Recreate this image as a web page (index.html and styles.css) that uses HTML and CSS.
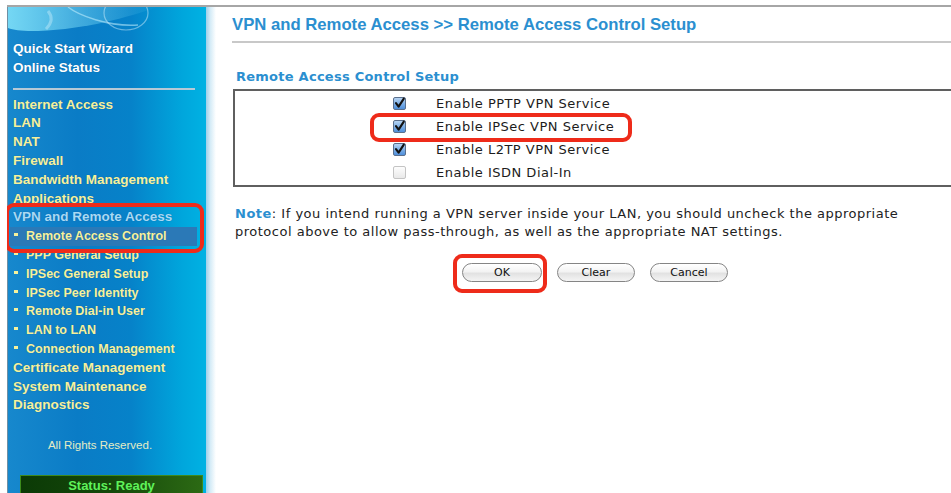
FILE: index.html
```html
<!DOCTYPE html>
<html lang="en">
<head>
<meta charset="utf-8">
<title>VPN and Remote Access</title>
<link rel="stylesheet" href="styles.css">
</head>
<body>
<div class="frame">
  <aside class="sidebar">
    <svg class="swoosh" width="198" height="30" viewBox="0 0 198 30" aria-hidden="true">
      <defs>
        <linearGradient id="sheen" x1="0" y1="0" x2="1" y2="0">
          <stop offset="0" stop-color="#7fe0f8" stop-opacity=".9"/>
          <stop offset="1" stop-color="#7fe0f8" stop-opacity="0"/>
        </linearGradient>
      </defs>
      <path d="M0 0 H150 C120 10 80 22 30 24 C15 24.5 6 23 0 21 Z" fill="url(#sheen)"/>
      <path d="M60 0 C70 8 100 20 130 18" fill="none" stroke="#c8f2ff" stroke-opacity=".55" stroke-width="1.4"/>
      <ellipse cx="118" cy="6" rx="22" ry="17" fill="none" stroke="#dff7ff" stroke-opacity=".45" stroke-width="1.2"/>
      <path d="M40 4 C45 10 44 16 38 22" fill="none" stroke="#e6faff" stroke-opacity=".35" stroke-width="3"/>
    </svg>

    <nav class="menu">
      <ul class="group">
        <li class="plain">Quick Start Wizard</li>
        <li class="plain">Online Status</li>
      </ul>
      <hr class="sep">
      <ul class="group">
        <li>Internet Access</li>
        <li>LAN</li>
        <li>NAT</li>
        <li>Firewall</li>
        <li>Bandwidth Management</li>
        <li>Applications</li>
        <li class="open">VPN and Remote Access</li>
        <li class="sub current">Remote Access Control</li>
        <li class="sub">PPP General Setup</li>
        <li class="sub">IPSec General Setup</li>
        <li class="sub">IPSec Peer Identity</li>
        <li class="sub">Remote Dial-in User</li>
        <li class="sub">LAN to LAN</li>
        <li class="sub">Connection Management</li>
        <li>Certificate Management</li>
        <li>System Maintenance</li>
        <li>Diagnostics</li>
      </ul>
    </nav>

    <p class="rights">All Rights Reserved.</p>
    <div class="status">Status: Ready</div>
  </aside>

  <div class="edge"></div>

  <main class="content">
    <h1 class="title">VPN and Remote Access &gt;&gt; Remote Access Control Setup</h1>

    <h2 class="section">Remote Access Control Setup</h2>
    <div class="options">
      <label class="opt"><span class="check on"><svg viewBox="0 0 13 13"><path d="M3 6.2 L5.6 9.6 L10.8 1.6" /></svg></span><span>Enable PPTP VPN Service</span></label>
      <label class="opt"><span class="check on"><svg viewBox="0 0 13 13"><path d="M3 6.2 L5.6 9.6 L10.8 1.6" /></svg></span><span>Enable IPSec VPN Service</span></label>
      <label class="opt"><span class="check on"><svg viewBox="0 0 13 13"><path d="M3 6.2 L5.6 9.6 L10.8 1.6" /></svg></span><span>Enable L2TP VPN Service</span></label>
      <label class="opt"><span class="check off"></span><span>Enable ISDN Dial-In</span></label>
    </div>

    <p class="note"><b>Note</b>: If you intend running a VPN server inside your LAN, you should uncheck the appropriate<br>protocol above to allow pass-through, as well as the appropriate NAT settings.</p>

    <div class="actions">
      <button class="btn btn-ok">OK</button>
      <button class="btn">Clear</button>
      <button class="btn">Cancel</button>
    </div>
  </main>

  <span class="callout callout-nav"></span>
  <span class="callout callout-opt"></span>
  <span class="callout callout-ok"></span>
</div>
</body>
</html>
```

FILE: styles.css
```css
html, body {
  margin: 0;
  padding: 0;
  background: #fff;
  overflow: hidden;
}

body {
  width: 951px;
  height: 493px;
}

.frame {
  position: relative;
  display: flex;
  margin: 5px 0 0 7px;
  height: 486px;
  border-top: 2px solid #a6a6a6;
  overflow: hidden;
}

/* ---------- left navigation ---------- */
.sidebar {
  flex: 0 0 198px;
  display: flex;
  flex-direction: column;
  border-left: 1px solid #6f8fa3;
  background: linear-gradient(90deg, #1788cd 0%, #0a7cc6 35%, #0682c9 62%, #00a6dc 88%, #00b2e3 100%);
  font-family: "Liberation Sans", Arial, sans-serif;
}

.sidebar > * {
  flex-shrink: 0;
}

.swoosh {
  display: block;
  height: 30px;
}

.menu {
  padding: 3px 0 0 5px;
}

.group {
  list-style: none;
  margin: 0;
  padding: 0;
}

.group li {
  font-size: 13.5px;
  font-weight: bold;
  line-height: 18.8px;
  height: 18.8px;
  color: #f6f19c;
  white-space: nowrap;
  text-shadow: 0 0 1px rgba(0, 40, 90, .35);
}

.group li.plain {
  color: #fff;
}

.group li.open {
  color: #a9d9f4;
}

.group li.sub {
  position: relative;
  padding-left: 13px;
  font-size: 12.5px;
}

.group li.sub::before {
  content: "";
  position: absolute;
  left: 1px;
  top: 6px;
  width: 4px;
  height: 3px;
  background: #f6f19c;
}

.group li.current {
  margin-left: -3px;
  padding-left: 16px;
  width: 171px;
  background: #2b79b7;
}

.group li.current::before {
  left: 4px;
}

.sep {
  margin: 10px 0 6px 0;
  width: 182px;
  height: 2px;
  border: 0;
  background: #b7c9d6;
}

.rights {
  margin: 22px 0 0 0;
  padding-right: 14px;
  text-align: center;
  font-size: 11.5px;
  line-height: 16px;
  color: #e4ecc4;
}

.status {
  margin: 22px 0 0 12px;
  width: 181px;
  height: 20px;
  border: 1px solid #3c8a1c;
  background: linear-gradient(90deg, #0b3a06 0%, #15480a 50%, #2c6a14 100%);
  color: #5ff25a;
  font-size: 13px;
  font-weight: bold;
  line-height: 19px;
  text-align: center;
}

/* soft fade between navigation and page */
.edge {
  flex: 0 0 10px;
  background: linear-gradient(90deg, #9fd0ea 0%, #d6ecf7 45%, #fff 100%);
}

/* ---------- page content ---------- */
.content {
  flex: 1;
  min-width: 0;
  padding: 8px 0 0 16px;
  font-family: "DejaVu Sans", Verdana, sans-serif;
  color: #1c1c1c;
}

.title {
  margin: 0;
  padding-bottom: 6px;
  border-bottom: 2px solid #c8c8c8;
  font-family: "Liberation Sans", Arial, sans-serif;
  font-size: 16.7px;
  line-height: 20px;
  font-weight: bold;
  color: #2b8fd0;
}

.section {
  margin: 26px 0 4px 4px;
  font-size: 13px;
  letter-spacing: .25px;
  line-height: 16px;
  font-weight: bold;
  color: #2b8fd0;
}

.options {
  margin: 0 -6px 0 1px;
  padding: 1px 0;
  border: 2px solid #5f5f5f;
}

.opt {
  display: flex;
  align-items: center;
  height: 23px;
  padding-left: 158px;
  gap: 30px;
  font-size: 13px;
  letter-spacing: .5px;
  color: #1c1c1c;
}

.check {
  flex: 0 0 13px;
  width: 13px;
  height: 13px;
  box-sizing: border-box;
  border-radius: 2px;
}

.check.on {
  border: 1px solid #5a6f8c;
  background: linear-gradient(#b7d4f2 0%, #7fb0e6 50%, #4f8fdb 100%);
}

.check.off {
  border: 1px solid #c4c4c4;
  background: linear-gradient(#fdfdfd, #e9e9e9);
}

.check svg {
  display: block;
  width: 13px;
  height: 13px;
  margin: -1px 0 0 -1px;
}

.check path {
  fill: none;
  stroke: #111;
  stroke-width: 2.1;
  stroke-linecap: round;
  stroke-linejoin: round;
}

.note {
  margin: 18px 0 0 3px;
  font-size: 13px;
  letter-spacing: .5px;
  line-height: 18px;
  color: #222;
  white-space: nowrap;
}

.note b {
  color: #2b8fd0;
}

.actions {
  display: flex;
  gap: 15px;
  margin: 22px 0 0 230px;
}

.btn {
  width: 78px;
  height: 19px;
  padding: 0;
  border: 1px solid #858585;
  border-radius: 10px;
  background: linear-gradient(#ffffff 0%, #f3f3f3 45%, #e2e2e2 55%, #f4f4f4 100%);
  font-family: "DejaVu Sans", Verdana, sans-serif;
  font-size: 11px;
  color: #111;
}

.btn-ok {
  width: 80px;
}

/* ---------- red highlight rings ---------- */
.callout {
  position: absolute;
  box-sizing: border-box;
  border: 4px solid #ee2b1a;
  border-radius: 9px;
  pointer-events: none;
}

.callout-nav {
  left: -2px;
  top: 196px;
  width: 199px;
  height: 50px;
}

.callout-opt {
  left: 363px;
  top: 106px;
  width: 262px;
  height: 29px;
}

.callout-ok {
  left: 446px;
  top: 247px;
  width: 94px;
  height: 39px;
}
```
